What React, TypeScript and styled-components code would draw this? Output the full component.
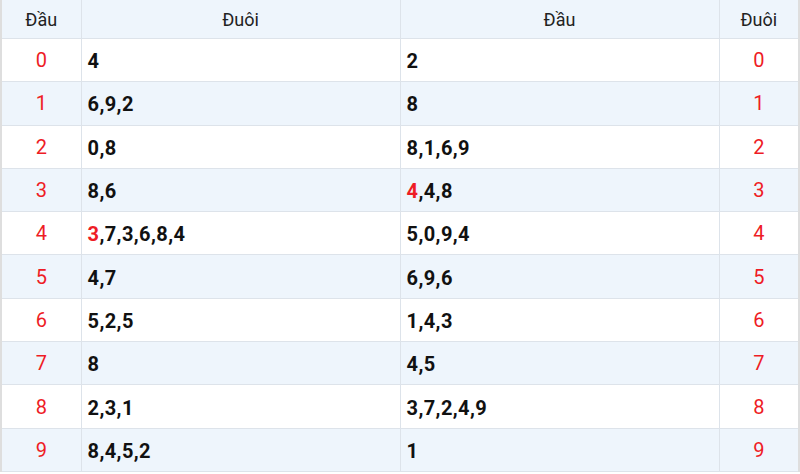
import styled, { createGlobalStyle } from "styled-components";

const GlobalStyle = createGlobalStyle`
  html, body {
    margin: 0;
    padding: 0;
    background: #fff;
    font-family: Roboto, "Liberation Sans", sans-serif;
  }
`;

interface Row {
  head: number;
  tails: string[];
  heads: string[];
  tail: number;
  tailsHot?: number;
  headsHot?: number;
}

const rows: Row[] = [
  { head: 0, tails: ["4"], heads: ["2"], tail: 0 },
  { head: 1, tails: ["6", "9", "2"], heads: ["8"], tail: 1 },
  { head: 2, tails: ["0", "8"], heads: ["8", "1", "6", "9"], tail: 2 },
  { head: 3, tails: ["8", "6"], heads: ["4", "4", "8"], tail: 3, headsHot: 0 },
  { head: 4, tails: ["3", "7", "3", "6", "8", "4"], heads: ["5", "0", "9", "4"], tail: 4, tailsHot: 0 },
  { head: 5, tails: ["4", "7"], heads: ["6", "9", "6"], tail: 5 },
  { head: 6, tails: ["5", "2", "5"], heads: ["1", "4", "3"], tail: 6 },
  { head: 7, tails: ["8"], heads: ["4", "5"], tail: 7 },
  { head: 8, tails: ["2", "3", "1"], heads: ["3", "7", "2", "4", "9"], tail: 8 },
  { head: 9, tails: ["8", "4", "5", "2"], heads: ["1"], tail: 9 },
];

const Digits = ({ list, hot }: { list: string[]; hot?: number }) => (
  <>
    {list.map((d, i) => (
      <span key={i}>
        {i > 0 && ","}
        {i === hot ? <Hot>{d}</Hot> : d}
      </span>
    ))}
  </>
);

const App = () => {
  return (
    <>
      <GlobalStyle />
      <Table>
        <colgroup>
          <col style={{ width: 80 }} />
          <col />
          <col />
          <col style={{ width: 80 }} />
        </colgroup>
        <thead>
          <tr>
            <Th>Đầu</Th>
            <Th>Đuôi</Th>
            <Th>Đầu</Th>
            <Th>Đuôi</Th>
          </tr>
        </thead>
        <tbody>
          {rows.map((r, i) => (
            <Tr key={r.head} $striped={i % 2 === 1}>
              <NumCell>{r.head}</NumCell>
              <ValueCell>
                <Digits list={r.tails} hot={r.tailsHot} />
              </ValueCell>
              <ValueCell>
                <Digits list={r.heads} hot={r.headsHot} />
              </ValueCell>
              <NumCell>{r.tail}</NumCell>
            </Tr>
          ))}
        </tbody>
      </Table>
    </>
  );
};

export default App;

const Table = styled.table`
  width: 800px;
  border-collapse: collapse;
  table-layout: fixed;
  border-left: 2px solid #dedede;
  border-right: 2px solid #dedede;
  border-bottom: 1px solid #dedede;
`;

const Th = styled.th`
  height: 38px;
  padding: 0;
  background: #eef5fc;
  font-weight: 400;
  font-size: 18px;
  color: #222;
  text-align: center;
  border: 1px solid #dde3ea;
  border-top: none;
`;

const Tr = styled.tr<{ $striped: boolean }>`
  height: 43.3px;
  background: ${(p) => (p.$striped ? "#eef5fc" : "#fff")};
`;

const NumCell = styled.td`
  padding: 0;
  text-align: center;
  font-size: 20px;
  color: #ee1c25;
  border: 1px solid #dde3ea;
`;

const ValueCell = styled.td`
  padding: 2px 6px 0;
  font-size: 20px;
  font-weight: 700;
  letter-spacing: 0.4px;
  color: #111;
  border: 1px solid #dde3ea;
`;

const Hot = styled.span`
  color: #ee1c25;
`;
